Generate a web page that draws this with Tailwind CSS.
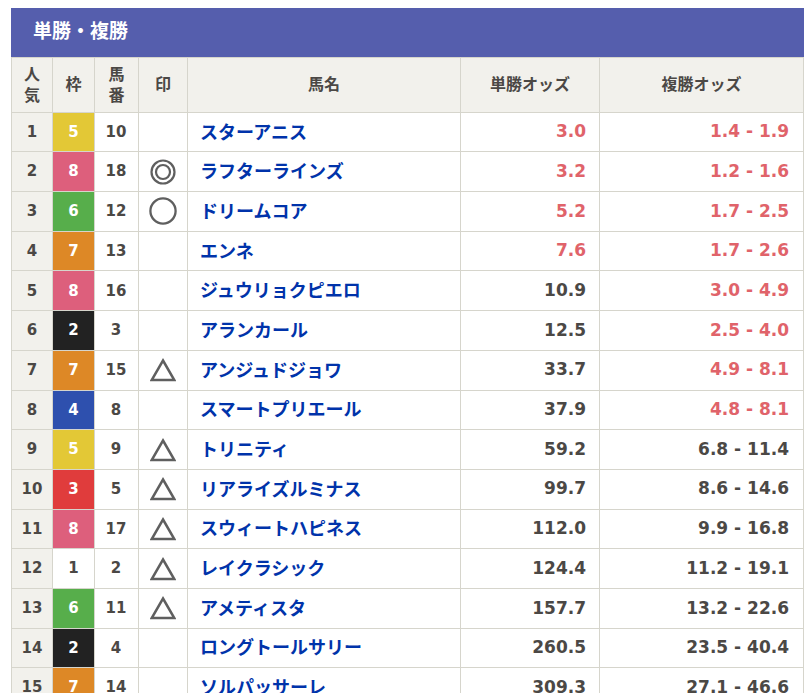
<!DOCTYPE html>
<html lang="ja">
<head>
  <meta charset="UTF-8" />
  <title>単勝・複勝</title>
  <script src="https://cdn.jsdelivr.net/npm/@tailwindcss/browser@4"></script>
</head>
<body class="bg-white overflow-hidden h-[693px] font-['DejaVu_Sans','Noto_Sans_CJK_JP',sans-serif] text-[#4b4845]">
  <div class="ml-[11px] mt-2 w-[793px]">
    <h2 class="h-[49px] bg-[#555ead] text-white text-[19px] font-bold leading-[46px] pl-[22px]">単勝・複勝</h2>
    <table class="w-[792px] table-fixed border-collapse">
      <colgroup>
        <col class="w-[41px]" /><col class="w-[42px]" /><col class="w-[44px]" /><col class="w-[49px]" />
        <col class="w-[273px]" /><col class="w-[139px]" /><col class="w-[204px]" />
      </colgroup>
      <thead class="bg-[#f2f1ec]">
        <tr class="h-[54.7px] text-[16px] leading-[21px] font-bold">
          <th class="border border-[#d6d5cc] px-[10px]">人気</th>
          <th class="border border-[#d6d5cc]">枠</th>
          <th class="border border-[#d6d5cc] px-[10px]">馬番</th>
          <th class="border border-[#d6d5cc]">印</th>
          <th class="border border-[#d6d5cc]">馬名</th>
          <th class="border border-[#d6d5cc]">単勝オッズ</th>
          <th class="border border-[#d6d5cc]">複勝オッズ</th>
        </tr>
      </thead>
      <tbody id="rows"></tbody>
    </table>
  </div>

  <script>
    const td = "border border-[#d6d5cc] p-0";
    const waku = {
      1: "bg-white",
      2: "bg-[#222222] text-white",
      3: "bg-[#e03c3c] text-white",
      4: "bg-[#2e50ae] text-white",
      5: "bg-[#e3c836] text-white",
      6: "bg-[#57ae4b] text-white",
      7: "bg-[#dd8826] text-white",
      8: "bg-[#dd5f7c] text-white"
    };
    const marks = {
      "": "",
      d: '<svg class="block mx-auto" width="26" height="26" viewBox="0 0 26 26" fill="none" stroke="#5f5f5f"><circle cx="13" cy="13" r="11.5" stroke-width="2.2"/><circle cx="13" cy="13" r="7" stroke-width="2.2"/></svg>',
      o: '<svg class="block mx-auto" width="28" height="28" viewBox="0 0 28 28" fill="none" stroke="#5f5f5f" stroke-width="2.3"><circle cx="14" cy="14" r="12.6"/></svg>',
      t: '<svg class="block mx-auto" width="26" height="24" viewBox="0 0 26 24" fill="none" stroke="#5f5f5f" stroke-width="2.5"><path d="M13 2.5 L24.3 22 H1.7 Z"/></svg>'
    };
    const data = [
      [5, 10, "", "スターアニス", "3.0", "1.4 - 1.9", 1, 1],
      [8, 18, "d", "ラフターラインズ", "3.2", "1.2 - 1.6", 1, 1],
      [6, 12, "o", "ドリームコア", "5.2", "1.7 - 2.5", 1, 1],
      [7, 13, "", "エンネ", "7.6", "1.7 - 2.6", 1, 1],
      [8, 16, "", "ジュウリョクピエロ", "10.9", "3.0 - 4.9", 0, 1],
      [2, 3, "", "アランカール", "12.5", "2.5 - 4.0", 0, 1],
      [7, 15, "t", "アンジュドジョワ", "33.7", "4.9 - 8.1", 0, 1],
      [4, 8, "", "スマートプリエール", "37.9", "4.8 - 8.1", 0, 1],
      [5, 9, "t", "トリニティ", "59.2", "6.8 - 11.4", 0, 0],
      [3, 5, "t", "リアライズルミナス", "99.7", "8.6 - 14.6", 0, 0],
      [8, 17, "t", "スウィートハピネス", "112.0", "9.9 - 16.8", 0, 0],
      [1, 2, "t", "レイクラシック", "124.4", "11.2 - 19.1", 0, 0],
      [6, 11, "t", "アメティスタ", "157.7", "13.2 - 22.6", 0, 0],
      [2, 4, "", "ロングトールサリー", "260.5", "23.5 - 40.4", 0, 0],
      [7, 14, "", "ソルパッサーレ", "309.3", "27.1 - 46.6", 0, 0]
    ];

    document.getElementById("rows").innerHTML = data.map((r, i) => `
      <tr class="h-[39.7px] font-bold">
        <td class="${td} bg-[#f2f1ec] text-center text-[15px]">${i + 1}</td>
        <td class="${td} ${waku[r[0]]} text-center text-[15px]">${r[0]}</td>
        <td class="${td} pr-px text-center text-[15px]">${r[1]}</td>
        <td class="${td}">${marks[r[2]]}</td>
        <td class="${td} pl-3 text-[18px] text-[#0033aa]">${r[3]}</td>
        <td class="${td} pr-[13px] text-right text-[17px] ${r[6] ? "text-[#e0636a]" : ""}">${r[4]}</td>
        <td class="${td} pr-[14px] text-right text-[17px] ${r[7] ? "text-[#e0636a]" : ""}">${r[5]}</td>
      </tr>`).join("");
  </script>
</body>
</html>
